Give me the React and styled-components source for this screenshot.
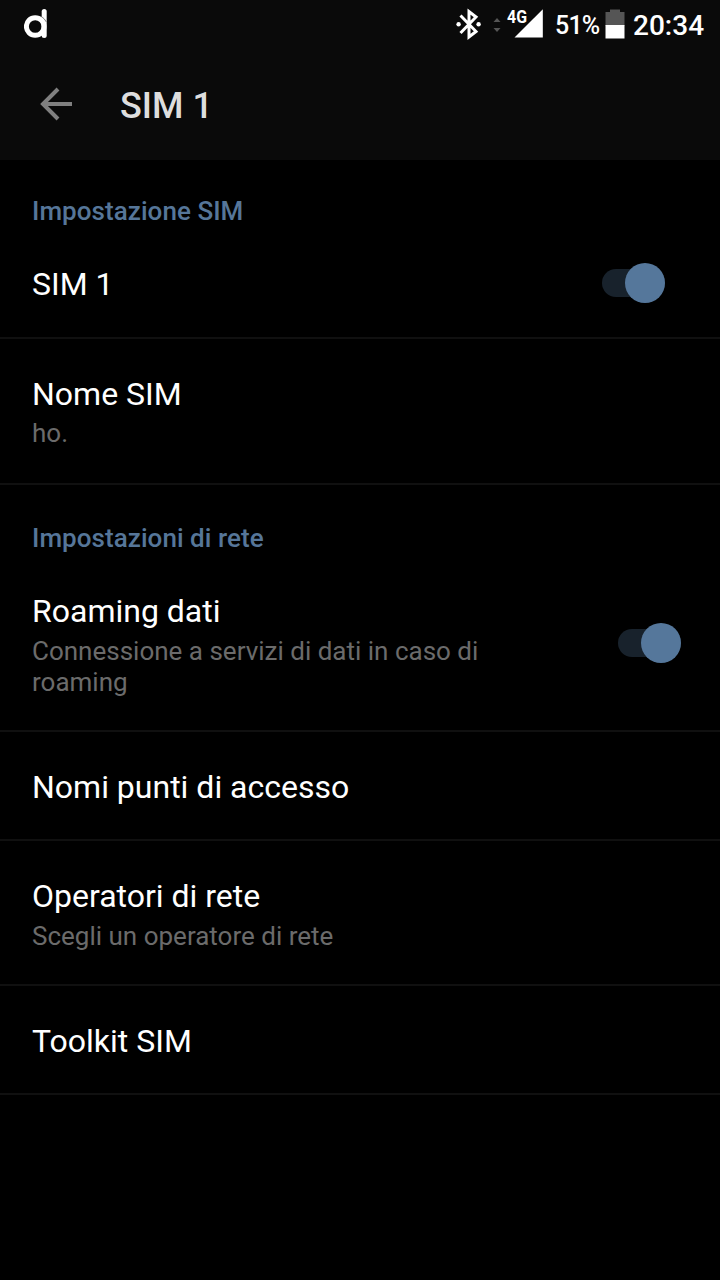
import { useState } from "react";
import styled, { createGlobalStyle } from "styled-components";

const GlobalStyle = createGlobalStyle`
  * {
    box-sizing: border-box;
  }

  body {
    margin: 0;
    background: #000;
    font-family: Roboto, "Liberation Sans", sans-serif;
  }
`;

const Screen = styled.main`
  width: 720px;
  min-height: 1280px;
  background: #000;
  color: #fff;
`;

const Header = styled.header`
  height: 160px;
  background: #0a0a0a;
`;

const StatusBar = styled.div`
  display: flex;
  align-items: flex-start;
  height: 48px;
  padding: 0 16px 0 24px;
`;

const Icon = styled.svg`
  display: block;
  flex: none;
  width: ${({ $w }) => $w}px;
  height: 48px;
  margin-left: ${({ $gap }) => $gap || 0}px;
`;

const Spacer = styled.div`
  flex: 1;
`;

const Percent = styled.span`
  width: 45px;
  margin-left: 11px;
  font-size: 25px;
  font-weight: 500;
  letter-spacing: -0.8px;
  line-height: 52px;
  white-space: nowrap;
`;

const Clock = styled.time`
  width: 71px;
  margin-left: 8px;
  font-size: 28px;
  font-weight: 500;
  line-height: 52px;
  white-space: nowrap;
`;

const Toolbar = styled.div`
  display: flex;
  align-items: center;
  height: 112px;
  padding: 0 40px;
`;

const BackButton = styled.button`
  display: flex;
  width: 80px;
  padding: 0;
  border: none;
  background: none;
  cursor: pointer;
`;

const Title = styled.h1`
  margin: 3px 0 0;
  color: #dedede;
  font-size: 36px;
  font-weight: 500;
  line-height: 42px;
`;

const Category = styled.h2`
  height: ${({ $height }) => $height}px;
  margin: 0;
  padding: ${({ $top }) => $top || 36}px 32px 0;
  color: #567699;
  font-size: 26px;
  font-weight: 500;
  letter-spacing: 0.05px;
  line-height: 31px;
`;

const Row = styled.div`
  display: flex;
  align-items: center;
  justify-content: space-between;
  height: ${({ $height }) => $height}px;
  padding: 0 ${({ $end }) => $end || 32}px 0 32px;
  border-bottom: 2px solid #101010;
`;

const Label = styled.div`
  align-self: flex-start;
  width: 480px;
  padding-top: 36px;
  font-size: 32px;
  line-height: 38px;
`;

const Summary = styled.div`
  margin-top: ${({ $gap }) => $gap || 6}px;
  color: #6b6b6b;
  font-size: 26px;
  line-height: 31px;
`;

const Track = styled.button`
  display: flex;
  align-items: center;
  justify-content: ${({ $on }) => ($on ? "flex-end" : "flex-start")};
  width: 63px;
  height: 28px;
  padding: 0;
  border: none;
  border-radius: 14px;
  background: #18222c;
  cursor: pointer;
`;

const Thumb = styled.span`
  flex: none;
  width: 40px;
  height: 40px;
  border-radius: 50%;
  background: ${({ $on }) => ($on ? "#55779b" : "#777")};
`;

const Switch = ({ label }) => {
    const [on, setOn] = useState(true);

    return (
        <Track role="switch" aria-checked={on} aria-label={label} $on={on} onClick={() => setOn(!on)}>
            <Thumb $on={on} />
        </Track>
    );
};

const Setting = ({ label, summary, gap, height, end, toggle }) => (
    <Row $height={height} $end={end}>
        <Label>
            {label}
            {summary && <Summary $gap={gap}>{summary}</Summary>}
        </Label>
        {toggle && <Switch label={label} />}
    </Row>
);

const NetworkType = styled.text`
  font-family: Roboto, sans-serif;
  font-size: 19px;
  font-weight: 700;
  fill: #fff;
`;

const App = () => (
    <Screen>
        <GlobalStyle />
        <Header>
            <StatusBar>
                <Icon $w={24} viewBox="0 0 24 48" fill="none" stroke="#fff">
                    <circle cx="11.2" cy="26.5" r="8.8" strokeWidth="5" />
                    <path d="M20.2 11.5V35.5" strokeWidth="5" strokeLinecap="round" />
                    <path d="M17.6 16.6Q20.6 18.6 22.4 22" stroke="#777" strokeWidth="0.9" />
                </Icon>
                <Spacer />
                {/* bluetooth connected */}
                <Icon $w={26} viewBox="0 0 26 48">
                    <path
                        d="M4.5 15.5L20 31.5L13 37V11.5L20 17L4.5 33"
                        fill="none"
                        stroke="#fff"
                        strokeWidth="3"
                    />
                    <circle cx="2.6" cy="24.3" r="2.2" fill="#fff" />
                    <circle cx="22.6" cy="24.3" r="2.2" fill="#fff" />
                </Icon>
                <Icon $w={8} $gap={11} viewBox="0 0 8 48" fill="#555">
                    <path d="M0.5 22L4 18L7.5 22ZM0.5 28L4 32L7.5 28Z" />
                </Icon>
                <Icon $w={38} $gap={5} viewBox="0 0 38 48">
                    <path d="M36.8 9.2V37.5H8.5Z" fill="#fff" />
                    <NetworkType x="1" y="22.7" textLength="20" lengthAdjust="spacingAndGlyphs">4G</NetworkType>
                </Icon>
                <Percent>51%</Percent>
                <Icon $w={20} $gap={5} viewBox="0 0 20 48">
                    <path d="M0.5 12H5V9.5H15V12H19.5V26H0.5Z" fill="#555" />
                    <path d="M0.5 25H19.5V38.5H0.5Z" fill="#fff" />
                </Icon>
                <Clock>20:34</Clock>
            </StatusBar>
            <Toolbar>
                <BackButton aria-label="Indietro">
                    <Icon $w={34} viewBox="0 0 34 48" fill="none" stroke="#808080" strokeWidth="4">
                        <path d="M18 9L3 24L18 39M2.5 24H32" />
                    </Icon>
                </BackButton>
                <Title>SIM 1</Title>
            </Toolbar>
        </Header>

        <Category $height={69}>Impostazione SIM</Category>
        <Setting label="SIM 1" height={110} end={55} toggle />
        <Setting label="Nome SIM" summary="ho." gap={5} height={146} />

        <Category $height={71} $top={38}>Impostazioni di rete</Category>
        <Setting
            label="Roaming dati"
            summary="Connessione a servizi di dati in caso di roaming"
            height={176}
            end={39}
            toggle
        />
        <Setting label="Nomi punti di accesso" height={109} />
        <Setting label="Operatori di rete" summary="Scegli un operatore di rete" height={145} />
        <Setting label="Toolkit SIM" height={109} />
    </Screen>
);

export default App;
